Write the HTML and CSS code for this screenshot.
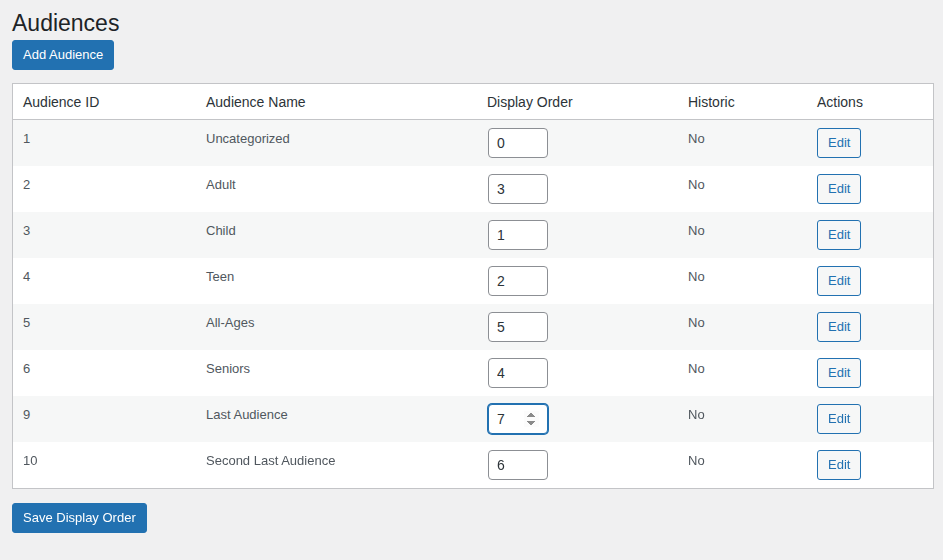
FILE: index.html
```html
<!DOCTYPE html>
<html>
<head>
<meta charset="utf-8">
<link rel="stylesheet" href="styles.css">
</head>
<body>
<div class="wrap">
  <h1 class="title">Audiences</h1>
  <button class="btn-primary">Add Audience</button>
  <table class="list">
    <colgroup>
      <col class="c1"><col class="c2"><col class="c3"><col class="c4"><col class="c5">
    </colgroup>
    <thead>
      <tr><th>Audience ID</th><th>Audience Name</th><th>Display Order</th><th>Historic</th><th>Actions</th></tr>
    </thead>
    <tbody>
      <tr><td>1</td><td>Uncategorized</td><td><input class="order" type="number" value="0"></td><td>No</td><td><button class="btn-edit">Edit</button></td></tr>
      <tr><td>2</td><td>Adult</td><td><input class="order" type="number" value="3"></td><td>No</td><td><button class="btn-edit">Edit</button></td></tr>
      <tr><td>3</td><td>Child</td><td><input class="order" type="number" value="1"></td><td>No</td><td><button class="btn-edit">Edit</button></td></tr>
      <tr><td>4</td><td>Teen</td><td><input class="order" type="number" value="2"></td><td>No</td><td><button class="btn-edit">Edit</button></td></tr>
      <tr><td>5</td><td>All-Ages</td><td><input class="order" type="number" value="5"></td><td>No</td><td><button class="btn-edit">Edit</button></td></tr>
      <tr><td>6</td><td>Seniors</td><td><input class="order" type="number" value="4"></td><td>No</td><td><button class="btn-edit">Edit</button></td></tr>
      <tr><td>9</td><td>Last Audience</td><td><input class="order focused" type="number" value="7" autofocus></td><td>No</td><td><button class="btn-edit">Edit</button></td></tr>
      <tr><td>10</td><td>Second Last Audience</td><td><input class="order" type="number" value="6"></td><td>No</td><td><button class="btn-edit">Edit</button></td></tr>
    </tbody>
  </table>
  <button class="btn-primary">Save Display Order</button>
</div>
</body>
</html>
```
FILE: styles.css
```css
html, body {
  margin: 0;
  padding: 0;
  background: #f0f0f1;
}
body {
  font-family: "Liberation Sans", Arial, sans-serif;
  font-size: 13px;
  color: #3c434a;
}
.wrap {
  padding: 0 9px 0 12px;
  display: flex;
  flex-direction: column;
  align-items: flex-start;
}
.title {
  margin: 0;
  padding: 8px 0 2px;
  font-size: 23px;
  line-height: 30px;
  font-weight: 400;
  color: #1d2327;
}
.btn-primary {
  font-family: inherit;
  font-size: 13px;
  height: 30px;
  line-height: 28px;
  padding: 0 10px;
  background: #2271b1;
  border: 1px solid #2271b1;
  border-radius: 3px;
  color: #fff;
  cursor: pointer;
}
.list {
  margin: 13px 0 14px;
  width: 922px;
  border: 1px solid #c3c4c7;
  border-collapse: separate;
  border-spacing: 0;
  background: #fff;
  table-layout: fixed;
}
.c1 { width: 183px; }
.c2 { width: 281px; }
.c3 { width: 201px; }
.c4 { width: 129px; }
.c5 { width: 126px; }
.list th {
  text-align: left;
  font-weight: 400;
  font-size: 14px;
  line-height: 19px;
  padding: 9px 10px 7px;
  color: #2c3338;
  border-bottom: 1px solid #c3c4c7;
}
.list td {
  vertical-align: top;
  padding: 8px 10px;
  line-height: 22px;
  color: #50575e;
}
.list tbody tr:nth-child(odd) td {
  background: #f6f7f7;
}
.order {
  box-sizing: border-box;
  display: block;
  width: 60px;
  height: 30px;
  margin: 0 0 0 1px;
  padding: 0 8px;
  font-family: inherit;
  font-size: 14px;
  color: #2c3338;
  background: #fff;
  border: 1px solid #8c8f94;
  border-radius: 4px;
  outline: none;
}
.order.focused {
  border-color: #2271b1;
  box-shadow: 0 0 0 1px #2271b1;
}
.order:not(.focused)::-webkit-inner-spin-button {
  -webkit-appearance: none;
  margin: 0;
}
.btn-edit {
  display: block;
  box-sizing: border-box;
  height: 30px;
  padding: 0 10px;
  margin-left: 0;
  font-family: inherit;
  font-size: 13px;
  line-height: 28px;
  color: #2271b1;
  background: #f6f7f7;
  border: 1px solid #2271b1;
  border-radius: 3px;
  cursor: pointer;
}
```
